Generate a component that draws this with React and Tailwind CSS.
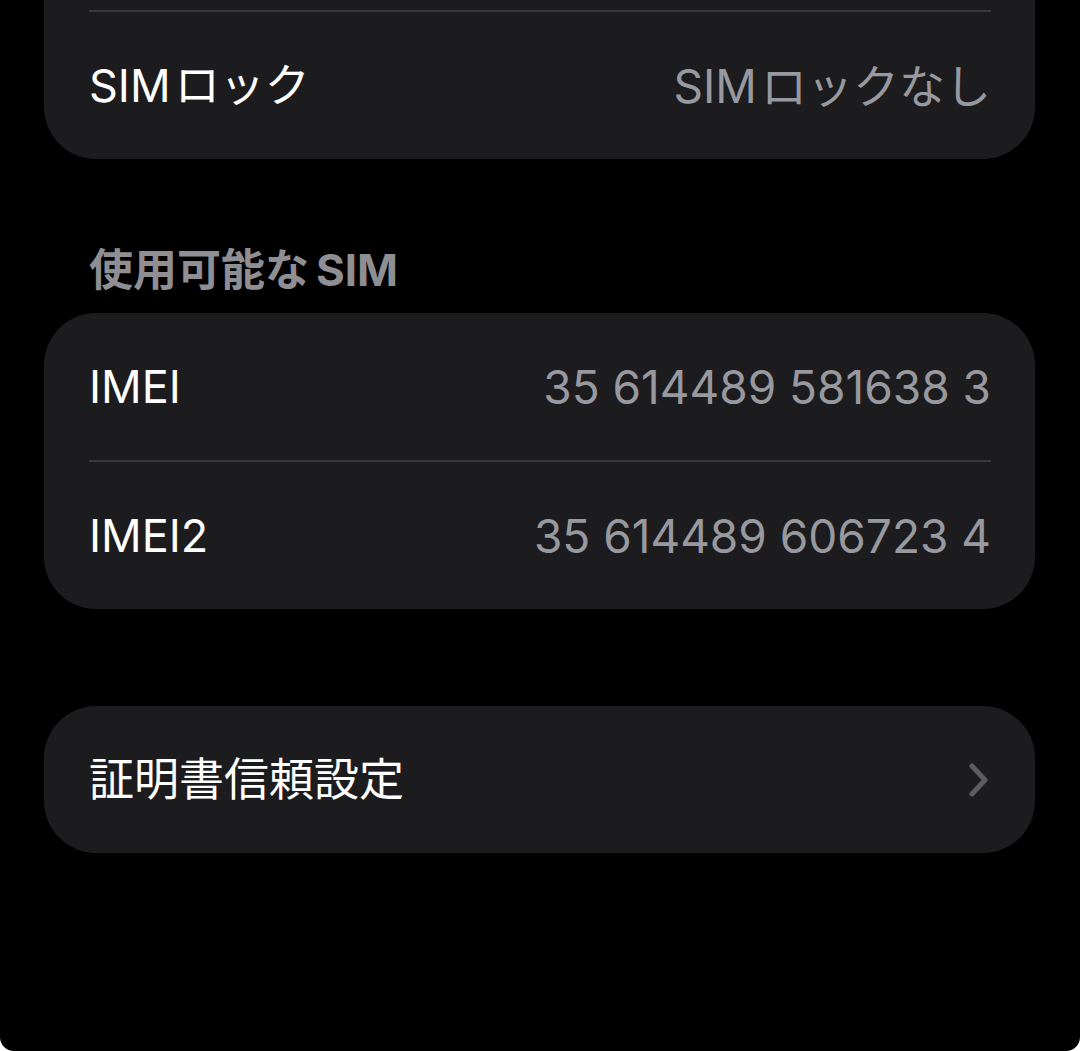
import React from 'react';

const font = { fontFamily: 'Inter, "Noto Sans CJK JP", sans-serif' };

function Row({ label, value, chevron }) {
  return (
    <div className="flex h-[147px] items-center justify-between pl-[45px] pr-[44px]">
      <span className="text-[45px] leading-none text-white">{label}</span>
      {value && <span className="text-[46px] leading-none text-[#98989f]">{value}</span>}
      {chevron && (
        <svg width="20" height="34" viewBox="0 0 20 34" className="mr-[2px]">
          <path d="M3 3 L16 17 L3 31" fill="none" stroke="#5b5b60" strokeWidth="5" strokeLinecap="round" strokeLinejoin="round" />
        </svg>
      )}
    </div>
  );
}

function Divider() {
  return <div className="ml-[45px] mr-[44px] h-[2px] bg-[#38383c]" />;
}

export default function App() {
  return (
    <div className="min-h-screen bg-white" style={font}>
      <div className="h-[1051px] overflow-hidden rounded-b-[14px] bg-black pl-[44px] pr-[45px]">
        <div className="rounded-b-[52px] bg-[#1c1c1e] pt-[10px]">
          <Divider />
          <Row label={'SIM\u200aロック'} value={'SIM\u200aロックなし'} />
        </div>

        <div className="mt-[83px] pl-[45px] text-[44px] font-bold leading-[56px] text-[#8e8e93]">
          {'使用可能な\u2009SIM'}
        </div>

        <div className="mt-[15px] rounded-[52px] bg-[#1c1c1e]">
          <Row label="IMEI" value="35 614489 581638 3" />
          <Divider />
          <Row label="IMEI2" value="35 614489 606723 4" />
        </div>

        <div className="mt-[97px] rounded-[52px] bg-[#1c1c1e]">
          <Row label="証明書信頼設定" chevron />
        </div>
      </div>
    </div>
  );
}
